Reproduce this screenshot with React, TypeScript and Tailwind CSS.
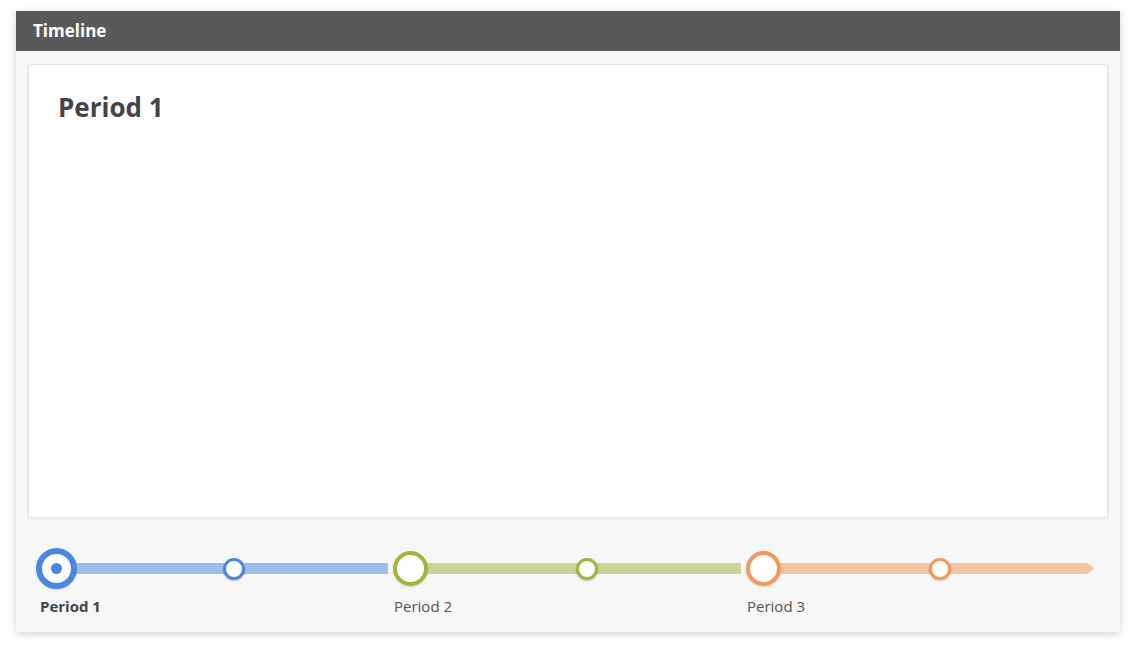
import React from "react";

type P = { label: string; ring: string; bar: string; active?: boolean; last?: boolean };

const periods: P[] = [
  { label: "Period 1", ring: "border-[#4a87e1]", bar: "bg-[#9dbeeb]", active: true },
  { label: "Period 2", ring: "border-[#a1b53b]", bar: "bg-[#c9d697]" },
  { label: "Period 3", ring: "border-[#f39859]", bar: "bg-[#f4c4a4]", last: true },
];

function Period({ p }: { p: P }) {
  return (
    <div className="w-[353px] flex flex-col">
      <div className="relative h-[41px]">
        <div
          className={`absolute top-[15px] h-[11px] left-[21px] ${p.bar} ${
            p.last
              ? "right-[0px] [clip-path:polygon(0_0,calc(100%-8px)_0,100%_50%,calc(100%-8px)_100%,0_100%)]"
              : "right-[1px]"
          }`}
        />
        {p.active ? (
          <div className={`absolute left-0 top-0 w-[41px] h-[41px] rounded-full border-[6px] ${p.ring} bg-white flex items-center justify-center shadow-[0_1px_2px_rgba(0,0,0,0.15)]`}>
            <div className="w-[11px] h-[11px] rounded-full bg-[#4a87e1]" />
          </div>
        ) : (
          <div className={`absolute left-[4px] top-[3px] w-[35px] h-[35px] rounded-full border-[4px] ${p.ring} bg-white shadow-[0_1px_2px_rgba(0,0,0,0.15)]`} />
        )}
        <div className={`absolute left-[187px] top-[10px] w-[22px] h-[22px] rounded-full border-[3px] ${p.ring} bg-white shadow-[0_1px_2px_rgba(0,0,0,0.2)]`} />
      </div>
      <div
        className={`mt-[7px] text-[15px] leading-[20px] ${
          p.active ? "pl-[4px] font-bold text-[#444]" : "pl-[5px] font-normal text-[#555]"
        }`}
      >
        {p.label}
      </div>
    </div>
  );
}

export default function App() {
  return (
    <div
      className="w-[1136px] h-[653px] bg-white pt-[11px] pl-[16px]"
      style={{ fontFamily: '"Open Sans", "Noto Sans", "Liberation Sans", sans-serif' }}
    >
      <div className="w-[1104px] h-[621px] flex flex-col bg-[#f7f7f7] shadow-[0_2px_8px_rgba(0,0,0,0.18)]">
        <div className="h-[40px] bg-[#595959] flex items-center pl-[17px] text-white font-bold text-[17px]">
          Timeline
        </div>
        <div className="flex-1 flex flex-col px-[12px] pt-[13px]">
          <div className="h-[454px] bg-white rounded-[3px] border border-[#e3e3e3] shadow-[0_1px_3px_rgba(0,0,0,0.08)] pl-[29px] pt-[24px]">
            <h1 className="text-[26px] leading-[36px] font-bold text-[#444]">Period 1</h1>
          </div>
          <div className="flex pl-[8px] mt-[30px]">
            {periods.map((p) => (
              <Period key={p.label} p={p} />
            ))}
          </div>
        </div>
      </div>
    </div>
  );
}
